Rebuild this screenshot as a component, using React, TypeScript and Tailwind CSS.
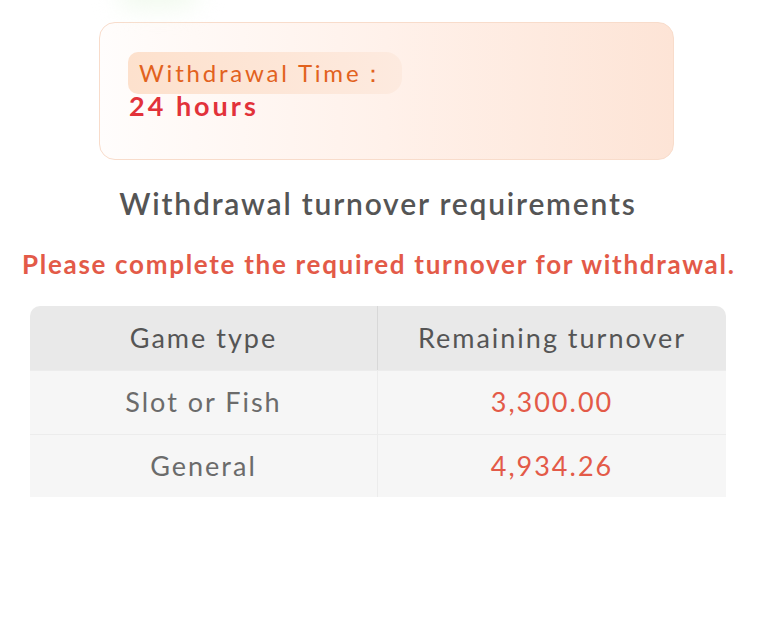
import React from 'react'

const rows = [
  { type: 'Slot or Fish', amount: '3,300.00' },
  { type: 'General', amount: '4,934.26' },
]

export default function App() {
  return (
    <div className="relative w-[781px] h-[638px] overflow-hidden bg-white font-['Lato',sans-serif]">
      <div className="absolute left-[118px] top-[-24px] w-[80px] h-[32px] rounded-full bg-[#f1faee] blur-md" />
      <div className="w-[696px] ml-[30px] pt-[22px]">
        <div className="ml-[69px] w-[575px] h-[138px] rounded-[16px] border border-[#f8dccb] bg-gradient-to-r from-[#fffdfc] via-[#fff1ea] to-[#fde4d6] pt-[29px]">
          <div className="ml-[28px] inline-flex items-center h-[42px] w-[274px] rounded-l-[10px] rounded-r-[16px] bg-gradient-to-r from-[#fde1cd] to-[#fdeadf] pl-[11px]">
            <span className="text-[24px] tracking-[2.8px] text-[#e2621e]">Withdrawal Time：</span>
          </div>
          <div className="ml-[29px] -mt-[3px] text-[27px] leading-[30px] font-bold tracking-[3px] text-[#e2323a]">24 hours</div>
        </div>

        <h2 className="mt-[24px] text-center text-[30px] leading-[38px] font-semibold tracking-[1.8px] text-[#555555]">
          Withdrawal turnover requirements
        </h2>
        <p className="mt-[26px] -ml-[8px] w-[713px] whitespace-nowrap text-center text-[26px] leading-[32px] font-bold tracking-[1.7px] text-[#e35a48]">
          Please complete the required turnover for withdrawal.
        </p>

        <div className="mt-[26px] rounded-t-[10px] overflow-hidden">
          <div className="grid grid-cols-[348px_1fr] h-[64px] bg-[#e9e9e9] text-[27px] tracking-[2px] text-[#555555]">
            <div className="flex items-center justify-center border-r border-[#d8d8d8]">Game type</div>
            <div className="flex items-center justify-center">Remaining turnover</div>
          </div>
          {rows.map((r) => (
            <div key={r.type} className="grid grid-cols-[348px_1fr] h-[63.5px] bg-[#f6f6f6] border-t border-[#ececec] text-[27px] tracking-[2px]">
              <div className="flex items-center justify-center border-r border-[#ececec] text-[#6b6b6b]">{r.type}</div>
              <div className="flex items-center justify-center text-[#e35a48]">{r.amount}</div>
            </div>
          ))}
        </div>
      </div>
    </div>
  )
}
